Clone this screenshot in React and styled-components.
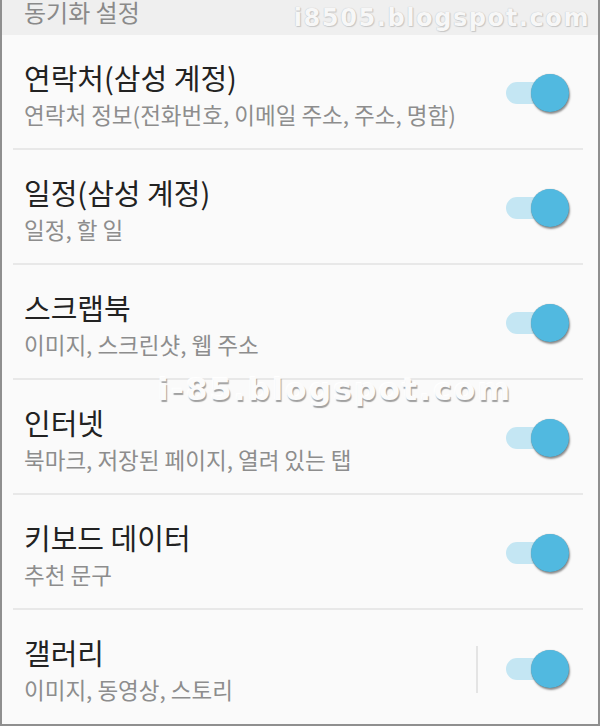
import React from "react";
import styled, { createGlobalStyle } from "styled-components";

const GlobalStyle = createGlobalStyle`
  html, body {
    margin: 0;
    padding: 0;
    background: #fafafa;
  }
  * { box-sizing: border-box; }
`;

const Frame = styled.div`
  position: relative;
  width: 600px;
  height: 726px;
  overflow: hidden;
  background: #fafafa;
  border: 2px solid #8f8f8f;
  border-top: none;
  font-family: "Noto Sans CJK KR", "Noto Sans", sans-serif;
`;

const SectionHeader = styled.div`
  height: 35px;
  background: #efefef;
  padding: 0 0 0 22px;
  font-size: 24px;
  line-height: 24px;
  color: #8a8a8a;
`;

const List = styled.div`
  display: flex;
  flex-direction: column;
`;

const Row = styled.div`
  display: flex;
  align-items: center;
  height: 115px;
  margin: 0 15px 0 11px;
  padding: 0 14px 0 11px;
  border-bottom: 2px solid #e8e8e8;
  &:last-child {
    border-bottom: none;
  }
`;

const TextBlock = styled.div`
  flex: 1;
  align-self: flex-start;
  padding-top: 24px;
  display: flex;
  flex-direction: column;
`;

const Title = styled.div`
  font-size: 29px;
  line-height: 36px;
  color: #222222;
`;

const Subtitle = styled.div`
  margin-top: 5px;
  font-size: 22.5px;
  line-height: 28px;
  color: #8d8d8d;
`;

const Separator = styled.div`
  width: 2px;
  height: 47px;
  margin-right: 28px;
  margin-top: 3px;
  background: #e4e4e4;
`;

const Toggle = styled.div`
  position: relative;
  width: 63px;
  height: 38px;
  margin-top: 3px;
  flex-shrink: 0;
`;

const Track = styled.div`
  position: absolute;
  left: 0;
  top: 8px;
  width: 54px;
  height: 22px;
  border-radius: 11px;
  background: ${(p) => (p.$on ? "#c4e6f3" : "#dddddd")};
`;

const Knob = styled.div`
  position: absolute;
  right: 0;
  top: 0;
  width: 38px;
  height: 38px;
  border-radius: 50%;
  background: ${(p) => (p.$on ? "#51b9e0" : "#f2f2f2")};
  box-shadow: 1px 2px 2px rgba(0, 0, 0, 0.42), 0 0 1px rgba(0, 0, 0, 0.35);
`;

const Watermark = styled.div`
  position: absolute;
  font-family: "DejaVu Sans", "Liberation Sans", sans-serif;
  font-weight: bold;
  white-space: nowrap;
  line-height: 1;
  pointer-events: none;
`;

const TopWatermark = styled(Watermark)`
  right: 8px;
  top: 6px;
  font-size: 24px;
  letter-spacing: 1.6px;
  color: #f7f7f7;
  text-shadow: 0 0 1px #b5b5b5, 1px 1px 1px #c8c8c8;
`;

const MiddleWatermark = styled(Watermark)`
  left: 156px;
  top: 374px;
  font-size: 31px;
  letter-spacing: 2.3px;
  color: #fbfbfb;
  text-shadow: 1px 2px 1px rgba(0, 0, 0, 0.36), -1px -1px 0 #ffffff;
`;

const items = [
  { title: "연락처(삼성 계정)", sub: "연락처 정보(전화번호, 이메일 주소, 주소, 명함)" },
  { title: "일정(삼성 계정)", sub: "일정, 할 일" },
  { title: "스크랩북", sub: "이미지, 스크린샷, 웹 주소" },
  { title: "인터넷", sub: "북마크, 저장된 페이지, 열려 있는 탭" },
  { title: "키보드 데이터", sub: "추천 문구" },
  { title: "갤러리", sub: "이미지, 동영상, 스토리", separator: true },
];

function Switch({ on }) {
  return (
    <Toggle>
      <Track $on={on} />
      <Knob $on={on} />
    </Toggle>
  );
}

export default function App() {
  return (
    <>
      <GlobalStyle />
      <Frame>
        <SectionHeader>동기화 설정</SectionHeader>
        <List>
          {items.map((it) => (
            <Row key={it.title}>
              <TextBlock>
                <Title>{it.title}</Title>
                <Subtitle>{it.sub}</Subtitle>
              </TextBlock>
              {it.separator && <Separator />}
              <Switch on />
            </Row>
          ))}
        </List>
        <TopWatermark>i8505.blogspot.com</TopWatermark>
        <MiddleWatermark>i-85.blogspot.com</MiddleWatermark>
      </Frame>
    </>
  );
}
